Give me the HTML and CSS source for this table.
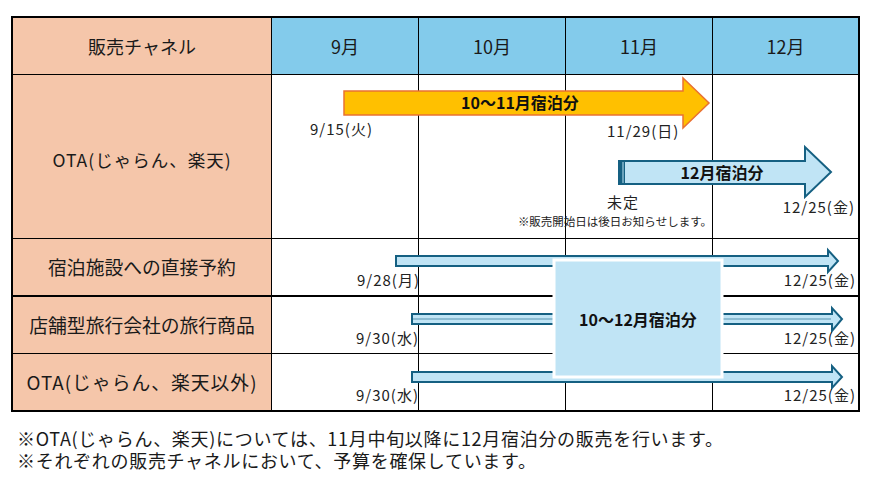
FILE: index.html
```html
<!DOCTYPE html>
<html lang="ja">
<head>
<meta charset="utf-8">
<link rel="stylesheet" href="styles.css">
</head>
<body>
<div class="page">
  <div class="chart">
    <div class="grid">
      <div class="cell ch">販売チャネル</div>
      <div class="cell month">9月</div>
      <div class="cell month">10月</div>
      <div class="cell month">11月</div>
      <div class="cell month last">12月</div>

      <div class="cell ch small spaced">OTA(じゃらん、楽天)</div>
      <div class="cell"></div>
      <div class="cell"></div>
      <div class="cell"></div>
      <div class="cell last"></div>

      <div class="cell ch big thick">宿泊施設への直接予約</div>
      <div class="cell thick"></div>
      <div class="cell thick"></div>
      <div class="cell thick"></div>
      <div class="cell last thick"></div>

      <div class="cell ch big">店舗型旅行会社の旅行商品</div>
      <div class="cell"></div>
      <div class="cell"></div>
      <div class="cell"></div>
      <div class="cell last"></div>

      <div class="cell ch big spaced bottom">OTA(じゃらん、楽天以外)</div>
      <div class="cell bottom"></div>
      <div class="cell bottom"></div>
      <div class="cell bottom"></div>
      <div class="cell last bottom"></div>
    </div>

    <svg class="overlay" width="875" height="420" viewBox="0 0 875 420">
      <!-- OTA orange arrow -->
      <polygon class="arrow-orange" points="344,91 683,91 683,78 709,103 683,128 683,115 344,115"/>
      <text class="bar-label" x="520" y="109" text-anchor="middle">10～11月宿泊分</text>
      <text class="date" x="310" y="135">9/15(火)</text>
      <text class="date" x="607" y="137">11/29(日)</text>

      <!-- OTA 12月 arrow -->
      <polygon class="arrow-blue" points="619,161 805,161 805,147 831,172 805,197 805,184 619,184"/>
      <rect class="dark" x="618" y="160" width="4.5" height="25"/>
      <rect class="dark" x="623.5" y="160" width="1.5" height="25"/>
      <text class="bar-label" x="722" y="179" text-anchor="middle">12月宿泊分</text>
      <text class="date" x="607" y="208">未定</text>
      <text class="note" x="712" y="226" text-anchor="end">※販売開始日は後日お知らせします。</text>
      <text class="date" x="855" y="213" text-anchor="end">12/25(金)</text>

      <!-- row 2 -->
      <polygon class="arrow-thin" points="396,256 828,256 828,250 838,261 828,272 828,266 396,266"/>
      <text class="date" x="420" y="286" text-anchor="end">9/28(月)</text>
      <text class="date" x="856" y="286" text-anchor="end">12/25(金)</text>

      <!-- row 3 -->
      <polygon class="arrow-thin" points="412,314 832,314 832,308 842,319 832,331 832,324 412,324"/>
      <line class="mid" x1="413" y1="319" x2="831" y2="319"/>
      <text class="date" x="419" y="344" text-anchor="end">9/30(水)</text>
      <text class="date" x="856" y="344" text-anchor="end">12/25(金)</text>

      <!-- row 4 -->
      <polygon class="arrow-thin" points="412,372 832,372 832,366 842,377 832,388 832,382 412,382"/>
      <text class="date" x="419" y="401" text-anchor="end">9/30(水)</text>
      <text class="date" x="856" y="401" text-anchor="end">12/25(金)</text>

      <!-- center box -->
      <rect class="box" x="554" y="260" width="168" height="117"/>
      <text class="bar-label" x="638" y="326" text-anchor="middle">10～12月宿泊分</text>
    </svg>
  </div>

  <div class="notes">
    <p>※OTA(じゃらん、楽天)については、11月中旬以降に12月宿泊分の販売を行います。</p>
    <p>※それぞれの販売チャネルにおいて、予算を確保しています。</p>
  </div>
</div>
</body>
</html>
```

FILE: styles.css
```css
* {
  box-sizing: border-box;
}

html, body {
  margin: 0;
  padding: 0;
  background: #ffffff;
}

body {
  font-family: "Noto Sans CJK JP", "Noto Sans", sans-serif;
  color: #1a1a1a;
  width: 875px;
  height: 480px;
  overflow: hidden;
}

.page {
  display: flex;
  flex-direction: column;
}

.chart {
  position: relative;
  padding: 16px 0 0 11px;
}

.grid {
  display: grid;
  grid-template-columns: 259px 147px 147px 147px 145px;
  grid-template-rows: 57px 164px 58px 57px 56px;
  width: 849px;
  border: 2px solid #000;
  background: #fff;
}

.cell {
  border-right: 1px solid #000;
  border-bottom: 1px solid #000;
  display: flex;
  align-items: center;
  justify-content: center;
  font-size: 18px;
  line-height: 1;
  white-space: nowrap;
}

.cell.last {
  border-right: none;
}

.cell.thick {
  border-bottom: 2px solid #000;
}

.cell.bottom {
  border-bottom: none;
}

.ch {
  background: #F5C6AA;
  font-size: 18px;
}

.ch.small {
  font-size: 17.5px;
  padding-top: 6px;
}

.ch.big {
  font-size: 18.8px;
}

.ch.spaced {
  letter-spacing: 1px;
}

.month {
  background: #83CBEB;
  font-size: 18px;
}

.overlay {
  position: absolute;
  left: 0;
  top: 0;
  pointer-events: none;
}

.arrow-orange {
  fill: #FFC000;
  stroke: #E97132;
  stroke-width: 1.5;
}

.arrow-blue {
  fill: #C0E4F5;
  stroke: #156082;
  stroke-width: 2;
}

.arrow-thin {
  fill: #C0E4F5;
  stroke: #156082;
  stroke-width: 2;
}

.mid {
  stroke: #156082;
  stroke-width: 1;
  opacity: 0.6;
}

.dark {
  fill: #156082;
}

.box {
  fill: #C0E4F5;
  stroke: #ffffff;
  stroke-width: 3;
}

.bar-label {
  font-family: "Noto Sans CJK JP", sans-serif;
  font-size: 16px;
  font-weight: 700;
  fill: #111;
}

.date {
  font-family: "Noto Sans CJK JP", sans-serif;
  font-size: 15px;
  letter-spacing: 1px;
  fill: #222;
}

.note {
  font-family: "Noto Sans CJK JP", sans-serif;
  font-size: 11.5px;
  fill: #222;
}

.notes {
  padding: 15px 0 0 17px;
}

.notes p {
  margin: 0;
  font-size: 18px;
  line-height: 22px;
  letter-spacing: 0.7px;
  white-space: nowrap;
}
```
